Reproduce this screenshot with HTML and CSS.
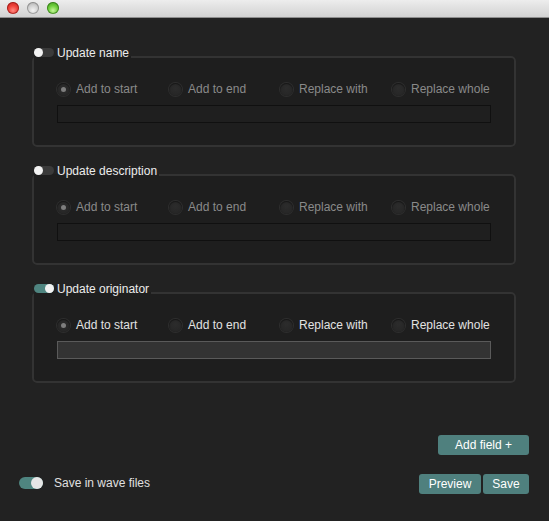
FILE: index.html
```html
<!DOCTYPE html>
<html lang="en">
<head>
<meta charset="utf-8">
<title>Batch edit</title>
<link rel="stylesheet" href="styles.css">
</head>
<body>
<div class="titlebar">
  <span class="light red"></span>
  <span class="light gray"></span>
  <span class="light green"></span>
</div>
<main class="content">
  <fieldset class="group disabled">
    <legend><span class="switch"></span><span class="legend-text">Update name</span></legend>
    <div class="group-body">
      <div class="radios">
        <label class="radio"><span class="dot checked"></span>Add to start</label>
        <label class="radio"><span class="dot"></span>Add to end</label>
        <label class="radio"><span class="dot"></span>Replace with</label>
        <label class="radio"><span class="dot"></span>Replace whole</label>
      </div>
      <div class="field"></div>
    </div>
  </fieldset>

  <fieldset class="group disabled">
    <legend><span class="switch"></span><span class="legend-text">Update description</span></legend>
    <div class="group-body">
      <div class="radios">
        <label class="radio"><span class="dot checked"></span>Add to start</label>
        <label class="radio"><span class="dot"></span>Add to end</label>
        <label class="radio"><span class="dot"></span>Replace with</label>
        <label class="radio"><span class="dot"></span>Replace whole</label>
      </div>
      <div class="field"></div>
    </div>
  </fieldset>

  <fieldset class="group enabled">
    <legend><span class="switch on"></span><span class="legend-text">Update originator</span></legend>
    <div class="group-body">
      <div class="radios">
        <label class="radio"><span class="dot checked"></span>Add to start</label>
        <label class="radio"><span class="dot"></span>Add to end</label>
        <label class="radio"><span class="dot"></span>Replace with</label>
        <label class="radio"><span class="dot"></span>Replace whole</label>
      </div>
      <div class="field"></div>
    </div>
  </fieldset>

  <div class="actions">
    <button class="btn btn-add">Add field +</button>
  </div>

  <div class="footer">
    <label class="toggle-row"><span class="switch big on"></span>Save in wave files</label>
    <div class="btns">
      <button class="btn btn-preview">Preview</button>
      <button class="btn btn-save">Save</button>
    </div>
  </div>
</main>
</body>
</html>
```

FILE: styles.css
```css
* { box-sizing: border-box; }

html, body {
  margin: 0;
  padding: 0;
  background: #222222;
  font-family: "Liberation Sans", Arial, Helvetica, sans-serif;
  font-size: 12px;
  line-height: 14px;
  color: #e6e6e6;
  height: 100%;
}

.titlebar {
  height: 18px;
  display: flex;
  align-items: center;
  gap: 8px;
  padding: 0 0 1px 7px;
  background: linear-gradient(#ededed, #d2d2d2);
  border-bottom: 1px solid #8e8e8e;
}

.light {
  width: 12px;
  height: 12px;
  border-radius: 50%;
}
.light.red {
  background: radial-gradient(circle at 50% 70%, #ff8a80 0%, #f0423a 45%, #b8211b 100%);
  box-shadow: inset 0 0 0 1px rgba(120, 10, 10, 0.55);
}
.light.gray {
  background: radial-gradient(circle at 50% 70%, #f4f4f4 0%, #cfcfcf 50%, #9c9c9c 100%);
  box-shadow: inset 0 0 0 1px rgba(90, 90, 90, 0.45);
}
.light.green {
  background: radial-gradient(circle at 50% 70%, #c6f59a 0%, #6fcf3c 45%, #3b8f1c 100%);
  box-shadow: inset 0 0 0 1px rgba(30, 90, 10, 0.55);
}

.content {
  padding: 28px 20px 0 19px;
}

.group {
  width: 484px;
  margin: 0 0 17px 13px;
  padding: 0;
  border: 2px solid #333333;
  border-radius: 5px;
  background: #1e1e1e;
  min-width: 0;
}

.group-body {
  padding: 14px 23px 22px;
}

.group legend {
  display: flex;
  align-items: flex-start;
  height: 22px;
  padding: 0 2px 0 0;
  margin: 0;
  color: #ececec;
}

.legend-text {
  margin-left: 3px;
}

.switch {
  position: relative;
  display: inline-block;
  width: 20px;
  height: 9px;
  margin-top: 2px;
  border-radius: 5px;
  background: #3a3a3a;
  flex: none;
}
.switch::after {
  content: "";
  position: absolute;
  left: 0;
  top: 0;
  width: 9px;
  height: 9px;
  border-radius: 50%;
  background: #f2f2f2;
}
.switch.on {
  background: #4f8580;
}
.switch.on::after {
  left: auto;
  right: 0;
}
.switch.big {
  width: 24px;
  height: 12px;
  border-radius: 6px;
  margin-top: 0;
}
.switch.big::after {
  width: 12px;
  height: 12px;
  background: #e6e6e6;
}

.radios {
  display: grid;
  grid-template-columns: 112px 111px 112px auto;
  height: 14px;
  margin-bottom: 9px;
}

.radio {
  display: flex;
  align-items: center;
  gap: 6px;
  white-space: nowrap;
}
.disabled .radio { color: #8a8a8a; }
.enabled .radio { color: #e2e2e2; }

.dot {
  position: relative;
  width: 13px;
  height: 13px;
  border-radius: 50%;
  background: radial-gradient(circle at 50% 40%, #2c2c2c, #242424);
  box-shadow: 0 0 0 1px #2e2e2e, inset 0 1px 1px rgba(0, 0, 0, 0.45);
  flex: none;
}
.dot.checked::after {
  content: "";
  position: absolute;
  left: 4px;
  top: 4px;
  width: 5px;
  height: 5px;
  border-radius: 50%;
  background: #7e7e7e;
}

.field {
  height: 18px;
  border: 1px solid #101010;
  background: #1f1f1f;
}
.enabled .field {
  border-color: #5a5a5a;
  background: #333333;
}

.actions {
  display: flex;
  justify-content: flex-end;
  margin-top: 52px;
}

.btn {
  height: 20px;
  border: none;
  border-radius: 3px;
  background: #4f807e;
  color: #ffffff;
  font-family: "Liberation Sans", Arial, Helvetica, sans-serif;
  font-size: 12px;
  line-height: 20px;
  padding: 0;
  text-align: center;
}
.btn-add { width: 91px; }
.btn-preview { width: 62px; }
.btn-save { width: 46px; }

.footer {
  display: flex;
  justify-content: space-between;
  align-items: center;
  margin-top: 19px;
}

.toggle-row {
  display: flex;
  align-items: center;
  gap: 11px;
  color: #e0e0e0;
  margin-top: -2px;
}

.btns {
  display: flex;
  gap: 2px;
}
```
